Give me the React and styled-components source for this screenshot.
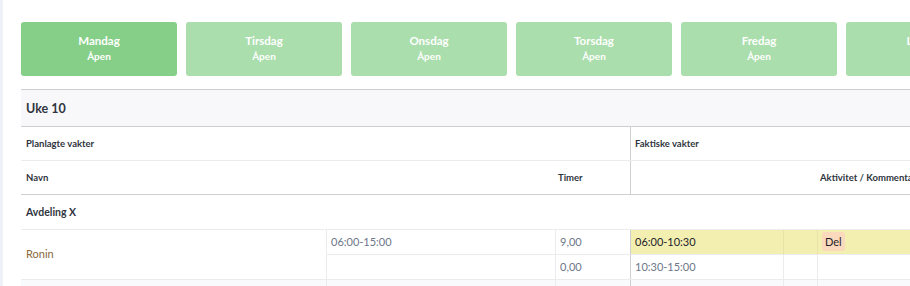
import React from "react";
import styled, { createGlobalStyle } from "styled-components";

const Global = createGlobalStyle`
  html, body { margin: 0; padding: 0; background: #fff; overflow: hidden; }
  body { font-family: Lato, "Noto Sans", sans-serif; color: #323a46; }
  * { box-sizing: border-box; }
`;

const Page = styled.div`
  display: flex;
  width: 910px;
  height: 286px;
  overflow: hidden;
`;

const Sidebar = styled.div`
  flex: 0 0 3px;
  background: #f0f1f7;
`;

const Main = styled.div`
  flex: 0 0 auto;
  padding: 22px 0 0 18px;
`;

const DayRow = styled.div`
  display: flex;
  gap: 9px;
`;

const DayCard = styled.div`
  flex: 0 0 156px;
  height: 54px;
  border-radius: 3px;
  background: ${(p) => (p.$active ? "#86cf89" : "#aadeac")};
  color: #fff;
  display: flex;
  flex-direction: column;
  align-items: center;
  justify-content: center;
  gap: 3px;
  padding-bottom: 3px;
`;

const DayName = styled.div`
  font-size: 11.5px;
  font-weight: 700;
  line-height: 13px;
`;

const DayStatus = styled.div`
  font-size: 10px;
  font-weight: 700;
  line-height: 12px;
`;

const Table = styled.div`
  margin-top: 13px;
  width: 1100px;
  border-top: 1px solid #cfcfd2;
`;

const WeekHeader = styled.div`
  height: 37px;
  background: #f8f8fa;
  border-bottom: 1px solid #cfcfd2;
  display: flex;
  align-items: center;
  padding-left: 5px;
  font-size: 12.5px;
  font-weight: 700;
  color: #2f3540;
`;

const Row = styled.div`
  display: grid;
  grid-template-columns: ${(p) => p.$cols};
  height: ${(p) => p.$h}px;
  border-bottom: 1px solid ${(p) => (p.$strong ? "#cfcfd2" : "#ececee")};
  background: ${(p) => p.$bg || "transparent"};
`;

const Cell = styled.div`
  display: flex;
  align-items: center;
  padding-left: ${(p) => (p.$pad ?? 4)}px;
  border-left: ${(p) =>
    p.$divider === "strong"
      ? "1px solid #cfcfd2"
      : p.$divider === "light"
      ? "1px solid #ececee"
      : "none"};
  font-size: ${(p) => p.$size || 10}px;
  font-weight: ${(p) => (p.$bold ? 700 : 400)};
  color: #2f3540;
  white-space: nowrap;
  overflow: hidden;
`;

const EmployeeBlock = styled.div`
  display: grid;
  grid-template-columns: 305px 229px 75px 153px 34px 1fr;
  grid-template-rows: 25px 24px;
  border-bottom: 1px solid #ececee;
`;

const NameCell = styled.div`
  grid-row: 1 / span 2;
  display: flex;
  align-items: center;
  padding-left: 5px;
  padding-bottom: 3px;
  font-size: 11px;
  color: #8a6a3c;
`;

const DataCell = styled.div`
  display: flex;
  align-items: center;
  padding-left: 4px;
  padding-bottom: 2px;
  border-left: 1px solid ${(p) => (p.$strong ? "#cfcfd2" : p.$hl ? "#e6e2a8" : "#ececee")};
  border-bottom: ${(p) => (p.$top ? "1px solid #ececee" : "none")};
  background: ${(p) => (p.$hl ? "#f3efb1" : "transparent")};
  font-size: 11px;
  color: ${(p) => (p.$dark ? "#1f232a" : "#6d7788")};
  white-space: nowrap;
`;

const Badge = styled.span`
  background: #fad9bc;
  color: #1f232a;
  border-radius: 3px;
  padding: 3px 3px;
  line-height: 13px;
  font-size: 11px;
`;

const days = ["Mandag", "Tirsdag", "Onsdag", "Torsdag", "Fredag", "Lørdag"];

export default function App() {
  return (
    <Page>
      <Global />
      <Sidebar />
      <Main>
        <DayRow>
          {days.map((d, i) => (
            <DayCard key={d} $active={i === 0}>
              <DayName>{d}</DayName>
              <DayStatus>Åpen</DayStatus>
            </DayCard>
          ))}
        </DayRow>
        <Table>
          <WeekHeader>Uke 10</WeekHeader>
          <Row $cols="609px 1fr" $h={34}>
            <Cell $bold $pad={5} $size={9.5}>Planlagte vakter</Cell>
            <Cell $bold $divider="strong" $size={9.5}>Faktiske vakter</Cell>
          </Row>
          <Row $cols="534px 75px 187px 1fr" $h={34} $strong>
            <Cell $bold $pad={5} $size={9.5}>Navn</Cell>
            <Cell $bold $pad={3} $size={9.5}>Timer</Cell>
            <Cell $divider="strong" />
            <Cell $bold $pad={3} $size={9.5}>Aktivitet / Kommentar</Cell>
          </Row>
          <Row $cols="1fr" $h={35}>
            <Cell $bold $pad={5} $size={10.5}>Avdeling X</Cell>
          </Row>
          <EmployeeBlock>
            <NameCell>Ronin</NameCell>
            <DataCell $top>06:00-15:00</DataCell>
            <DataCell $top>9,00</DataCell>
            <DataCell $top $strong $hl $dark>06:00-10:30</DataCell>
            <DataCell $top $hl />
            <DataCell $top $hl>
              <Badge>Del</Badge>
            </DataCell>
            <DataCell />
            <DataCell>0,00</DataCell>
            <DataCell $strong>10:30-15:00</DataCell>
            <DataCell />
            <DataCell />
          </EmployeeBlock>
          <Row $cols="305px 229px 75px 153px 34px 1fr" $h={24} $bg="#f9fafb">
            <Cell />
            <Cell $divider="light" />
            <Cell $divider="light" />
            <Cell $divider="strong" />
            <Cell $divider="light" />
            <Cell $divider="light" />
          </Row>
        </Table>
      </Main>
    </Page>
  );
}
